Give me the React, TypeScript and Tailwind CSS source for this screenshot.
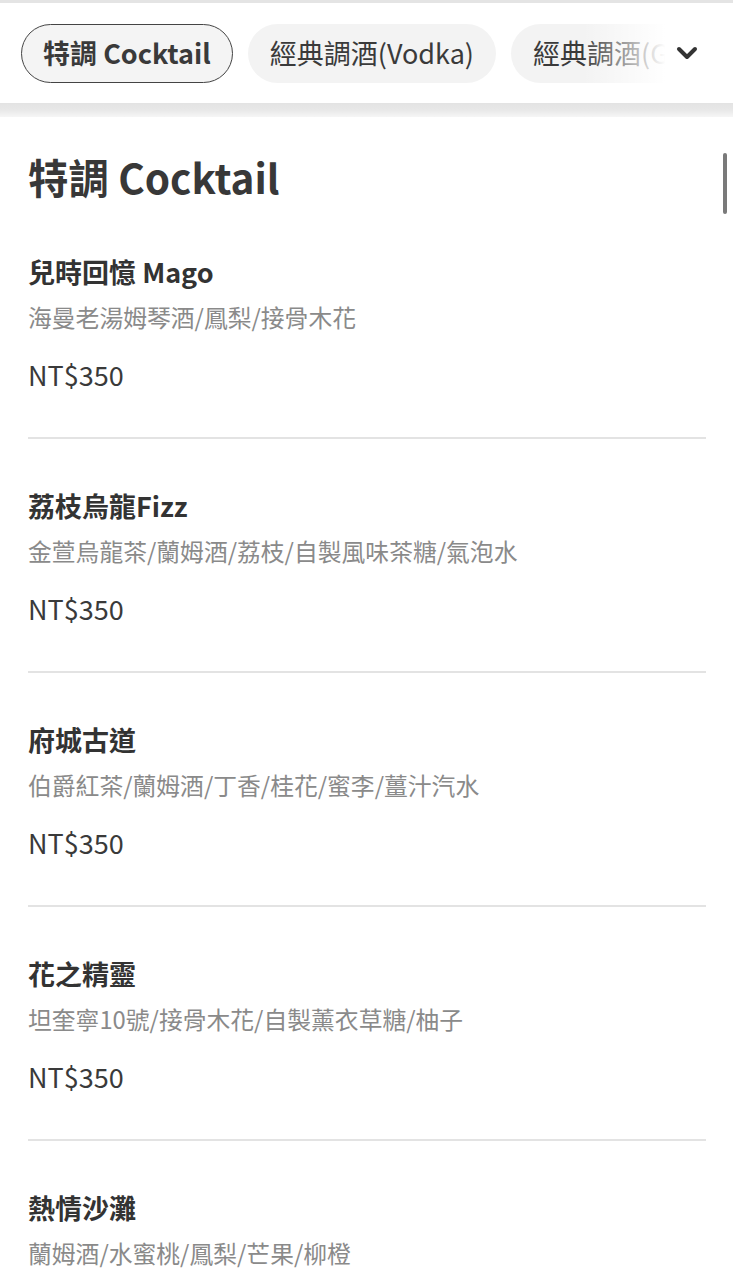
import { ChevronDown } from "lucide-react";

const TABS = ["特調 Cocktail", "經典調酒(Vodka)", "經典調酒(Gin)"];

const ITEMS = [
  { name: "兒時回憶 Mago", desc: "海曼老湯姆琴酒/鳳梨/接骨木花", price: "NT$350" },
  { name: "荔枝烏龍Fizz", desc: "金萱烏龍茶/蘭姆酒/荔枝/自製風味茶糖/氣泡水", price: "NT$350" },
  { name: "府城古道", desc: "伯爵紅茶/蘭姆酒/丁香/桂花/蜜李/薑汁汽水", price: "NT$350" },
  { name: "花之精靈", desc: "坦奎寧10號/接骨木花/自製薰衣草糖/柚子", price: "NT$350" },
  { name: "熱情沙灘", desc: "蘭姆酒/水蜜桃/鳳梨/芒果/柳橙", price: "NT$350" },
];

const font = { fontFamily: '"Noto Sans CJK TC", "Noto Sans", sans-serif' };

export default function App() {
  return (
    <div className="relative w-[733px] h-[1280px] overflow-hidden bg-white" style={font}>
      <div className="h-[3px] bg-[#e4e4e4]" />
      <div className="relative h-[100px] bg-white">
        <div className="flex gap-[15px] pl-[21px] pt-[21px] overflow-hidden whitespace-nowrap">
          {TABS.map((t, i) => (
            <div
              key={t}
              className={
                i === 0
                  ? "shrink-0 h-[59px] flex items-center px-[21px] rounded-full border-[1.5px] border-[#444] bg-[#f4f4f4] text-[27px] font-bold text-[#3a3a3a]"
                  : "shrink-0 h-[59px] flex items-center px-[22px] rounded-full bg-[#f3f3f3] text-[27px] text-[#3a3a3a]"
              }
            >
              {t}
            </div>
          ))}
        </div>
        <div className="absolute right-0 top-0 h-full w-[150px] flex items-center justify-end pr-[30px] bg-gradient-to-r from-transparent via-white via-55% to-white">
          <ChevronDown size={32} strokeWidth={3} className="text-[#333]" />
        </div>
      </div>
      <div className="h-[14px] bg-gradient-to-b from-[#e3e3e3] via-[#e8e8e8] to-[#f6f6f6]" />

      <div className="px-[28px] pt-[33px]">
        <h1 className="text-[40.5px] leading-[54px] font-bold text-[#383838]">特調 Cocktail</h1>
        <div className="pt-[50px]">
          {ITEMS.map((it) => (
            <div key={it.name}>
              <div className="text-[27px] leading-[36px] font-bold text-[#333]">{it.name}</div>
              <div className="mt-[11px] text-[23.8px] leading-[32px] text-[#8a8a8a]">{it.desc}</div>
              <div className="mt-[24px] text-[27px] leading-[36px] text-[#3a3a3a]">{it.price}</div>
              <div className="mt-[44px] mb-[49px] h-[2px] bg-[#e3e3e3] w-[678px]" />
            </div>
          ))}
        </div>
      </div>

      <div className="absolute left-[723px] top-[153px] w-[4px] h-[61px] rounded-full bg-[#7a7a7a]" />
    </div>
  );
}
